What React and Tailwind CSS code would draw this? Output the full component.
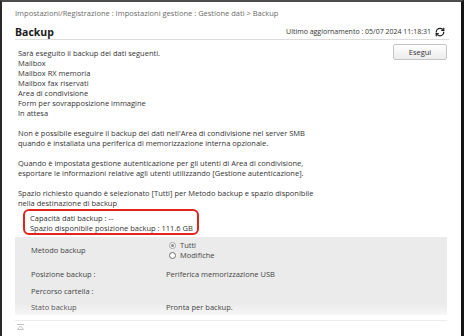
import { RefreshCw } from 'lucide-react';

const items = [
  'Sarà eseguito il backup dei dati seguenti.',
  'Mailbox',
  'Mailbox RX memoria',
  'Mailbox fax riservati',
  'Area di condivisione',
  'Form per sovrapposizione immagine',
  'In attesa',
];

function Radio({ checked, label }) {
  return (
    <div className="flex items-center h-[10px]">
      <span
        className={`ml-[3px] w-[7px] h-[7px] rounded-full border flex items-center justify-center bg-white ${
          checked ? 'border-[#a0a0a0]' : 'border-[#707070]'
        }`}
      >
        {checked && <span className="w-[3px] h-[3px] rounded-full bg-[#8a8a8a]" />}
      </span>
      <span className="ml-[4px]">{label}</span>
    </div>
  );
}

export default function App() {
  return (
    <div className="w-[464px] h-[336px] overflow-hidden bg-white border-t-2 border-t-[#4d4d4d] border-l-2 border-l-[#2a2a2a] border-r-[3px] border-r-[#141414] font-['Open_Sans',sans-serif] text-[7.5px] leading-[10px] text-[#333]">
      <div className="pl-[13px] pr-[12px]">
        {/* Breadcrumb */}
        <div className="pt-[6px] text-[#6b6b6b]">
          Impostazioni/Registrazione : Impostazioni gestione : Gestione dati &gt; Backup
        </div>

        {/* Title row */}
        <div className="mt-[7px] flex items-center justify-between border-b border-[#dcdcdc] h-[15px]">
          <h1 className="text-[10.5px] leading-[14px] font-bold text-[#1a1a1a]">Backup</h1>
          <div className="flex items-center gap-[4px] pr-[4px]">
            <span className="text-[7px]">Ultimo aggiornamento : 05/07 2024 11:18:31</span>
            <RefreshCw size={10} strokeWidth={3} className="text-[#222]" />
          </div>
        </div>

        {/* Body */}
        <div className="flex justify-between">
          <div className="pl-[3px] pt-[8px]">
            <div>
              {items.map(t => (
                <div key={t}>{t}</div>
              ))}
            </div>
            <div className="mt-[10px]">
              <div>Non è possibile eseguire il backup dei dati nell'Area di condivisione nel server SMB</div>
              <div>quando è installata una periferica di memorizzazione interna opzionale.</div>
            </div>
            <div className="mt-[10px]">
              <div>Quando è impostata gestione autenticazione per gli utenti di Area di condivisione,</div>
              <div>esportare le informazioni relative agli utenti utilizzando [Gestione autenticazione].</div>
            </div>
            <div className="mt-[10px]">
              <div>Spazio richiesto quando è selezionato [Tutti] per Metodo backup e spazio disponibile</div>
              <div>nella destinazione di backup</div>
            </div>
            <div className="mt-[1px] ml-[5px] w-[176px] border-2 border-[#e3231f] rounded-[6px] pl-[5px] pt-[2px]">
              <div>Capacità dati backup : --</div>
              <div>Spazio disponibile posizione backup : 111.6 GB</div>
            </div>
          </div>
          <button className="mt-[4px] mr-[2px] w-[54px] h-[16px] border border-[#c6c6c6] rounded-[2px] bg-linear-to-b from-white to-[#ececec] text-[7.5px] text-[#333]">
            Esegui
          </button>
        </div>

        {/* Settings panel */}
        <div className="mt-[2px] w-[432px] bg-linear-to-b from-[#ebebeb] from-85% to-[#f6f6f6] pt-[3px] pb-[3px] text-[#444]">
          <div className="flex">
            <div className="w-[151px] pl-[16px] pt-[5px]">Metodo backup</div>
            <div>
              <Radio checked label="Tutti" />
              <Radio label="Modifiche" />
            </div>
          </div>
          <div className="flex mt-[9px]">
            <div className="w-[151px] pl-[16px]">Posizione backup :</div>
            <div>Periferica memorizzazione USB</div>
          </div>
          <div className="flex mt-[7px]">
            <div className="w-[151px] pl-[16px]">Percorso cartella :</div>
            <div></div>
          </div>
          <div className="flex mt-[6px]">
            <div className="w-[151px] pl-[16px] text-[#555]">Stato backup</div>
            <div>Pronta per backup.</div>
          </div>
        </div>

        <div className="mt-[5px] w-[432px] border-t border-[#ececec]" />
        <div className="mt-[3px] pl-[2px]">
          <svg width="7" height="6" viewBox="0 0 7 6" className="block">
            <line x1="0" y1="0.5" x2="7" y2="0.5" stroke="#c4c4c4" strokeWidth="1" />
            <path d="M0.5 5.5 L3.5 2 L6.5 5.5 Z" fill="none" stroke="#c4c4c4" strokeWidth="1" />
          </svg>
        </div>
      </div>
    </div>
  );
}
